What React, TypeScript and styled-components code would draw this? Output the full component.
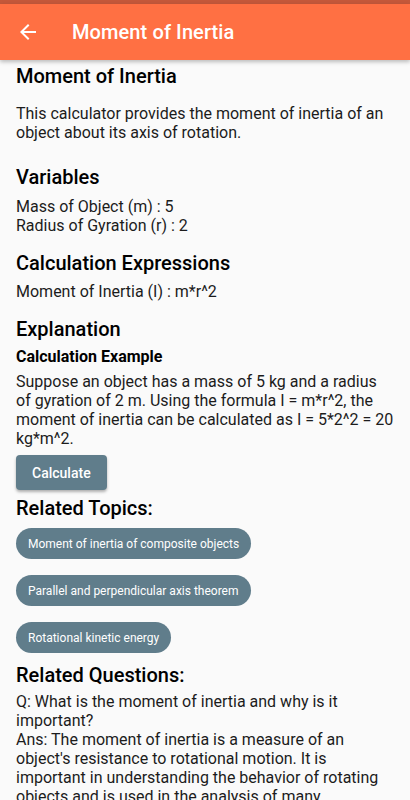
import React from "react";
import styled, { createGlobalStyle } from "styled-components";

const GlobalStyle = createGlobalStyle`
  html, body {
    margin: 0;
    padding: 0;
    background: #fafafa;
  }
  body {
    font-family: Roboto, "Noto Sans", "Liberation Sans", sans-serif;
    -webkit-font-smoothing: antialiased;
  }
`;

const Screen = styled.div`
  width: 410px;
  height: 800px;
  background: #fafafa;
  overflow: hidden;
`;

const StatusBar = styled.div`
  height: 4px;
  background: #c4583a;
`;

const AppBar = styled.header`
  height: 56px;
  background: #ff7043;
  display: flex;
  align-items: center;
  box-shadow: 0 2px 4px rgba(0, 0, 0, 0.25);
  position: relative;
  z-index: 1;
`;

const BackButton = styled.button`
  width: 56px;
  height: 56px;
  border: none;
  background: transparent;
  padding: 0;
  display: flex;
  align-items: center;
  justify-content: center;
  cursor: pointer;
`;

const AppTitle = styled.h1`
  margin: 0 0 0 16px;
  font-size: 20px;
  font-weight: 500;
  color: #fff;
  letter-spacing: 0.1px;
`;

const Content = styled.main`
  padding: 4px 16px 0;
`;

const Heading = styled.h2<{ $gap?: number }>`
  margin: ${(p) => p.$gap ?? 16}px 0 0;
  font-size: 20px;
  line-height: 24px;
  font-weight: 500;
  color: #000;
`;

const SubHeading = styled.h3`
  margin: 6px 0 0;
  font-size: 16px;
  line-height: 19px;
  font-weight: 700;
  color: #000;
`;

const Text = styled.p<{ $gap?: number }>`
  margin: ${(p) => p.$gap ?? 8}px 0 0;
  font-size: 16px;
  line-height: 19px;
  color: #1c1c1c;
`;

const CalcButton = styled.button`
  margin-top: 7px;
  height: 35px;
  padding: 0 16px;
  border: none;
  border-radius: 4px;
  background: #607d8b;
  color: #fff;
  font-family: Roboto, "Liberation Sans", sans-serif;
  font-size: 14px;
  font-weight: 500;
  box-shadow: 0 2px 3px rgba(0, 0, 0, 0.3);
  cursor: pointer;
`;

const ChipList = styled.div`
  display: flex;
  flex-direction: column;
  align-items: flex-start;
  gap: 16px;
  margin-top: 8px;
`;

const Chip = styled.span`
  display: inline-flex;
  align-items: center;
  height: 31px;
  padding: 0 12px;
  border-radius: 16px;
  background: #607d8b;
  color: #fff;
  font-size: 12px;
`;

const topics = [
  "Moment of inertia of composite objects",
  "Parallel and perpendicular axis theorem",
  "Rotational kinetic energy",
];

export default function App() {
  return (
    <Screen>
      <GlobalStyle />
      <StatusBar />
      <AppBar>
        <BackButton aria-label="Back">
          <svg width="24" height="24" viewBox="0 0 24 24">
            <path
              d="M20 11H7.83l5.59-5.59L12 4l-8 8 8 8 1.41-1.41L7.83 13H20v-2z"
              fill="#fff"
            />
          </svg>
        </BackButton>
        <AppTitle>Moment of Inertia</AppTitle>
      </AppBar>
      <Content>
        <Heading $gap={0}>Moment of Inertia</Heading>
        <Text $gap={16}>
          This calculator provides the moment of inertia of an object about its
          axis of rotation.
        </Text>
        <Heading $gap={23}>Variables</Heading>
        <Text>
          Mass of Object (m) : 5
          <br />
          Radius of Gyration (r) : 2
        </Text>
        <Heading>Calculation Expressions</Heading>
        <Text $gap={7}>Moment of Inertia (I) : m*r^2</Text>
        <Heading>Explanation</Heading>
        <SubHeading>Calculation Example</SubHeading>
        <Text $gap={6}>
          Suppose an object has a mass of 5 kg and a radius of gyration of 2 m.
          Using the formula I = m*r^2, the moment of inertia can be calculated
          as I = 5*2^2 = 20 kg*m^2.
        </Text>
        <CalcButton>Calculate</CalcButton>
        <Heading $gap={6}>Related Topics:</Heading>
        <ChipList>
          {topics.map((t) => (
            <Chip key={t}>{t}</Chip>
          ))}
        </ChipList>
        <Heading $gap={10}>Related Questions:</Heading>
        <Text $gap={5}>
          Q: What is the moment of inertia and why is it important?
          <br />
          Ans: The moment of inertia is a measure of an object's resistance to
          rotational motion. It is important in understanding the behavior of
          rotating objects and is used in the analysis of many mechanical
          systems.
        </Text>
      </Content>
    </Screen>
  );
}
